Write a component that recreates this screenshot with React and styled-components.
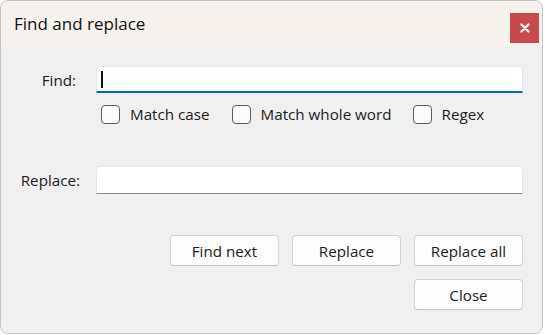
import React from "react";
import styled, { createGlobalStyle } from "styled-components";

const Global = createGlobalStyle`
  html, body { margin: 0; padding: 0; background: #ffffff; }
  body { font-family: "Open Sans", "Noto Sans", sans-serif; color: #1b1b1b; }
  * { box-sizing: border-box; }
`;

const Window = styled.div`
  width: 543px;
  height: 334px;
  border: 1px solid #c4c4c4;
  border-radius: 8px;
  overflow: hidden;
  background: #f0f0f0;
  display: flex;
  flex-direction: column;
`;

const TitleBar = styled.div`
  height: 46px;
  flex: none;
  background: #f8f2ef;
  display: flex;
  align-items: flex-start;
  justify-content: space-between;
  padding: 0 3px 0 13px;
`;

const Title = styled.div`
  font-size: 17px;
  line-height: 20px;
  margin-top: 13px;
  color: #111;
`;

const CloseX = styled.button`
  width: 29px;
  height: 30px;
  margin-top: 12px;
  border: none;
  padding: 0;
  background: #c94a4c;
  color: #fff;
  display: flex;
  align-items: center;
  justify-content: center;
`;

const Body = styled.div`
  flex: 1;
  padding: 19px 19px 0 15px;
  display: flex;
  flex-direction: column;
`;

const FieldRow = styled.div`
  display: flex;
  align-items: center;
  margin-top: ${(p) => p.$top || 0}px;
`;

const Label = styled.label`
  width: 80px;
  flex: none;
  text-align: right;
  padding-right: ${(p) => p.$pad}px;
  font-size: 15.2px;
  color: #1b1b1b;
`;

const Input = styled.div`
  flex: 1;
  height: ${(p) => p.$h}px;
  background: #fff;
  border-radius: 3px 3px 0 0;
  border: 1px solid #e6e6e6;
  border-bottom: ${(p) => (p.$focus ? "2px solid #0067c0" : "1px solid #8a8a8a")};
  display: flex;
  align-items: center;
  padding-left: 4px;
`;

const Caret = styled.span`
  width: 1.5px;
  height: 17px;
  background: #111;
`;

const Options = styled.div`
  display: flex;
  align-items: center;
  margin: 11px 0 0 85px;
`;

const Check = styled.label`
  display: flex;
  align-items: center;
  font-size: 15.2px;
  margin-right: ${(p) => p.$gap}px;
`;

const Box = styled.span`
  width: 19px;
  height: 19px;
  border: 1.5px solid #5e5e5e;
  border-radius: 4px;
  background: #fbfbfb;
  margin-right: 10px;
`;

const Buttons = styled.div`
  display: grid;
  grid-template-columns: repeat(3, 109px);
  gap: 13px 13px;
  justify-content: end;
  margin-top: 41px;
`;

const Btn = styled.button`
  height: 31px;
  background: #fdfdfd;
  border: 1px solid #d3d3d3;
  border-bottom-color: #c3c3c3;
  border-radius: 4px;
  font-family: inherit;
  font-size: 15.2px;
  color: #1b1b1b;
  padding: 0;
  grid-column: ${(p) => p.$col || "auto"};
`;

export default function App() {
  return (
    <>
      <Global />
      <Window>
        <TitleBar>
          <Title>Find and replace</Title>
          <CloseX aria-label="Close">
            <svg width="10" height="10" viewBox="0 0 10 10">
              <path d="M1.5 1.5 L8.5 8.5 M8.5 1.5 L1.5 8.5" stroke="#fff" strokeWidth="2.2" strokeLinecap="round" />
            </svg>
          </CloseX>
        </TitleBar>
        <Body>
          <FieldRow>
            <Label $pad={20}>Find:</Label>
            <Input $h={27} $focus>
              <Caret />
            </Input>
          </FieldRow>
          <Options>
            <Check $gap={22}><Box />Match case</Check>
            <Check $gap={21}><Box />Match whole word</Check>
            <Check $gap={0}><Box />Regex</Check>
          </Options>
          <FieldRow $top={42}>
            <Label $pad={16}>Replace:</Label>
            <Input $h={28} />
          </FieldRow>
          <Buttons>
            <Btn>Find next</Btn>
            <Btn>Replace</Btn>
            <Btn>Replace all</Btn>
            <Btn $col="3">Close</Btn>
          </Buttons>
        </Body>
      </Window>
    </>
  );
}
